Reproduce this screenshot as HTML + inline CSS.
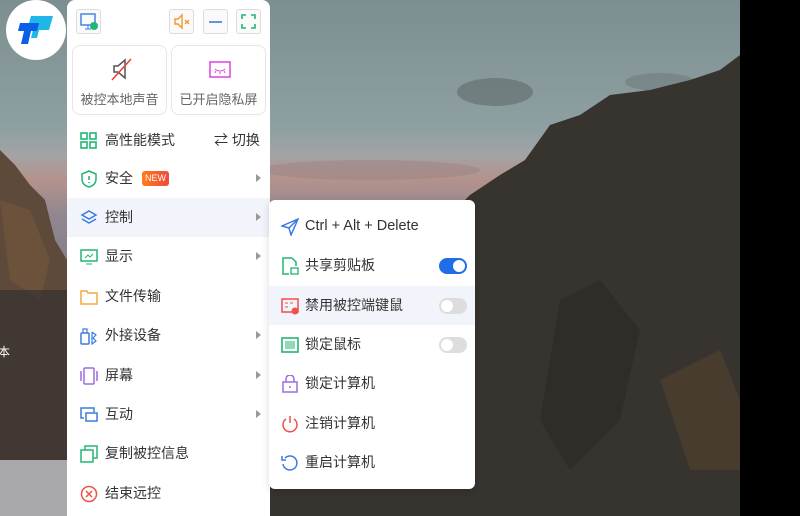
<!DOCTYPE html>
<html><head><meta charset="utf-8">
<style>
*{margin:0;padding:0;box-sizing:border-box}
body{width:800px;height:516px;overflow:hidden;position:relative;font-family:"Liberation Sans","Noto Sans CJK SC",sans-serif;background:#000}
.bg{position:absolute;left:0;top:0}
.menu{position:absolute;left:67px;top:0;width:203px;height:516px;background:#fff;border-radius:8px 8px 0 0}
.sub{position:absolute;left:269px;top:200px;width:206px;height:289px;background:#fff;border-radius:6px;box-shadow:0 2px 8px rgba(0,0,0,.15)}
.tb{position:absolute;top:9px;width:25px;height:25px;border:1px solid #dcdcdc;border-radius:3px;background:#fafafa}
.card{position:absolute;top:45px;width:95px;height:70px;border:1px solid #e6e6e6;border-radius:8px;text-align:center;font-size:13px;color:#666}
.card span{position:absolute;left:0;right:0;top:43px}
.card svg{position:absolute;left:36px;top:11px}
.row{position:absolute;left:0;right:0;height:39px;font-size:14px;color:#333}
.row svg{position:absolute;left:13px;top:11px}
.row .t{position:absolute;left:38px;top:10px;line-height:18px}
.row .ar{position:absolute;right:9px;top:15px;width:0;height:0;border-left:5px solid #999;border-top:4px solid transparent;border-bottom:4px solid transparent}
.hl{background:#f1f5fb}
.tg{position:absolute;right:8px;top:12px;width:28px;height:16px;border-radius:8px;background:#ddd}
.tg i{position:absolute;left:2px;top:2px;width:12px;height:12px;border-radius:50%;background:#fff}
.tg.on{background:#1f6ee8}.tg.on i{left:14px}
.srow{position:absolute;left:0;right:0;height:39px;font-size:14px;color:#333}
.srow svg{position:absolute;left:12px;top:11px}
.srow .t{position:absolute;left:36px;top:10px;line-height:18px}
</style></head><body>
<svg class="bg" width="800" height="516">
<defs>
<linearGradient id="sky" x1="0" y1="0" x2="0" y2="1">
<stop offset="0" stop-color="#7b8e90"/><stop offset=".25" stop-color="#8fa0a2"/><stop offset=".3" stop-color="#a3a3a4"/><stop offset=".35" stop-color="#b4928c"/><stop offset=".42" stop-color="#8f8690"/><stop offset="1" stop-color="#5d5a66"/></linearGradient>
</defs>
<rect width="740" height="516" fill="url(#sky)"/>
<ellipse cx="495" cy="92" rx="38" ry="14" fill="#606a6a" opacity=".6"/>
<ellipse cx="660" cy="82" rx="35" ry="9" fill="#6e7676" opacity=".5"/>
<ellipse cx="370" cy="170" rx="110" ry="10" fill="#9d8282" opacity=".5"/>
<polygon points="270,270 320,265 360,250 400,240 440,225 470,195 500,175 525,160 550,125 580,115 610,95 650,90 690,80 720,70 740,55 740,516 270,516" fill="#37332f"/>
<polygon points="560,300 600,280 640,330 620,420 570,470 540,420" fill="#2c2926" opacity=".6"/>
<polygon points="660,380 720,350 740,400 740,470 690,470" fill="#5a4630" opacity=".5"/>
<polygon points="0,150 15,165 30,185 45,200 55,240 67,260 67,516 0,516" fill="#5e4a3a"/>
<polygon points="0,200 30,210 50,260 40,300 10,280" fill="#7a5a3a" opacity=".5"/>
<rect x="0" y="290" width="67" height="170" fill="#363130" opacity=".7"/>
<rect x="0" y="460" width="67" height="56" fill="#a9a9ab"/>
<text x="-2" y="356" font-size="12" fill="#fff" font-family="Noto Sans CJK SC">本</text>
<rect x="740" width="60" height="516" fill="#000"/>
</svg>
<div style="position:absolute;left:6px;top:0;width:60px;height:60px;border-radius:50%;background:#fff"></div>
<svg style="position:absolute;left:17px;top:14px" width="38" height="32"><polygon points="14,2 36,2 32,16 22,16 20,24 14,24 16,16 10,16" fill="#1fb6e8"/><polygon points="3,9 22,9 20,17 14,17 11,30 4,30 7,17 1,17" fill="#0a5ee8"/></svg>
<div class="menu">
<div class="tb" style="left:9px"><svg width="23" height="23"><rect x="4" y="4" width="14" height="11" fill="none" stroke="#3a7be0" stroke-width="1.4"/><path d="M8 19h6M11 15v4" stroke="#3a7be0"/><circle cx="17" cy="16" r="4" fill="#22b573"/></svg></div>
<div class="tb" style="left:102px"><svg width="23" height="23"><path d="M5 9h3l4-4v13l-4-4H5z" fill="none" stroke="#f29a2e" stroke-width="1.4"/><path d="M15 10l4 4M19 10l-4 4" stroke="#f29a2e" stroke-width="1.4"/></svg></div>
<div class="tb" style="left:136px"><svg width="23" height="23"><path d="M5 12h13" stroke="#3a7be0" stroke-width="1.6"/></svg></div>
<div class="tb" style="left:169px"><svg width="23" height="23"><path d="M5 9V5h4M14 5h4v4M18 14v4h-4M9 18H5v-4" fill="none" stroke="#22b573" stroke-width="1.6"/></svg></div>
<div class="card" style="left:5px"><svg width="24" height="24"><path d="M5 9h4l7-6v18l-7-6H5z" fill="none" stroke="#555" stroke-width="1.5"/><path d="M3 23L22 2" stroke="#e8463c" stroke-width="1.6"/></svg><span>被控本地声音</span></div>
<div class="card" style="left:104px"><svg width="24" height="24"><rect x="2" y="5" width="20" height="15" fill="none" stroke="#e040e0" stroke-width="1.5"/><path d="M7 12q5 4 10 0M8 14l-1 2M12 15v2M16 14l1 2" stroke="#e040e0" fill="none"/></svg><span>已开启隐私屏</span></div>
<div class="row" style="top:121px"><svg width="18" height="18"><g fill="none" stroke="#22b573" stroke-width="1.6"><rect x="1" y="1" width="6" height="6"/><rect x="10" y="1" width="6" height="6"/><rect x="1" y="10" width="6" height="6"/><rect x="10" y="10" width="6" height="6"/></g></svg><span class="t">高性能模式</span><span class="t" style="left:147px;color:#333">⇄ 切换</span></div>
<div class="row" style="top:159px"><svg width="18" height="18"><path d="M9 1l7 3v5q0 6-7 8q-7-2-7-8V4z" fill="none" stroke="#22b573" stroke-width="1.5"/><path d="M9 6v4M9 12v1" stroke="#22b573" stroke-width="1.6"/></svg><span class="t">安全</span><span style="position:absolute;left:75px;top:12px;width:27px;height:15px;background:linear-gradient(90deg,#ff7a1a,#f04a3c);color:#fff;font-size:9px;line-height:15px;text-align:center;border-radius:3px">NEW</span><i class="ar"></i></div>
<div class="row hl" style="top:198px"><svg width="18" height="18"><path d="M9 2l7 4-7 4-7-4z M2 10l7 4 7-4" fill="none" stroke="#3a7be0" stroke-width="1.5"/></svg><span class="t">控制</span><i class="ar"></i></div>
<div class="row" style="top:237px"><svg width="18" height="18"><rect x="1" y="2" width="16" height="11" fill="none" stroke="#22b573" stroke-width="1.5"/><path d="M5 10l3-3 2 2 3-3M6 16h6" stroke="#22b573" fill="none"/></svg><span class="t">显示</span><i class="ar"></i></div>
<div class="row" style="top:277px"><svg width="18" height="18"><path d="M1 3h6l1 2h9v11H1z" fill="none" stroke="#f5a742" stroke-width="1.5"/></svg><span class="t">文件传输</span></div>
<div class="row" style="top:316px"><svg width="18" height="18"><rect x="1" y="6" width="8" height="11" rx="1" fill="none" stroke="#3a7be0" stroke-width="1.5"/><path d="M3 6V2h4v4M12 5l4 3-3 3 3 3-4 3V5" fill="none" stroke="#3a7be0" stroke-width="1.2"/></svg><span class="t">外接设备</span><i class="ar"></i></div>
<div class="row" style="top:356px"><svg width="18" height="18"><rect x="4" y="1" width="10" height="16" rx="1" fill="none" stroke="#9b6be0" stroke-width="1.5"/><path d="M1 4v10M17 4v10" stroke="#9b6be0" stroke-width="1.5"/></svg><span class="t">屏幕</span><i class="ar"></i></div>
<div class="row" style="top:395px"><svg width="18" height="18"><path d="M14 6V2H1v10h3" fill="none" stroke="#3a7be0" stroke-width="1.5"/><rect x="6" y="7" width="11" height="8" fill="none" stroke="#3a7be0" stroke-width="1.5"/></svg><span class="t">互动</span><i class="ar"></i></div>
<div class="row" style="top:434px"><svg width="18" height="18"><rect x="1" y="5" width="12" height="12" fill="none" stroke="#22b573" stroke-width="1.5"/><path d="M5 5V1h12v12h-4" fill="none" stroke="#22b573" stroke-width="1.5"/></svg><span class="t">复制被控信息</span></div>
<div class="row" style="top:474px"><svg width="18" height="18"><circle cx="9" cy="9" r="7.5" fill="none" stroke="#f0504a" stroke-width="1.5"/><path d="M6 6l6 6M12 6l-6 6" stroke="#f0504a" stroke-width="1.5"/></svg><span class="t">结束远控</span></div>
</div>
<div class="sub">
<div class="srow" style="top:7px"><svg width="18" height="18"><path d="M17 1L1 8l7 2 2 7zM8 10l9-9" fill="none" stroke="#3a7be0" stroke-width="1.5"/></svg><span class="t" style="font-size:14.5px">Ctrl + Alt + Delete</span></div>
<div class="srow" style="top:46px"><svg width="18" height="18"><path d="M11 1H2v16h6M11 1l4 4v4" fill="none" stroke="#22b573" stroke-width="1.5"/><rect x="10" y="11" width="7" height="6" fill="none" stroke="#22b573" stroke-width="1.3"/></svg><span class="t">共享剪贴板</span><div class="tg on"><i></i></div></div>
<div class="srow hl" style="top:86px"><svg width="18" height="18"><rect x="1" y="2" width="16" height="13" fill="none" stroke="#f0504a" stroke-width="1.5"/><path d="M4 6h3M9 6h3M4 10h3" stroke="#f0504a"/><circle cx="14" cy="14" r="3.5" fill="#f0504a"/></svg><span class="t">禁用被控端键鼠</span><div class="tg"><i></i></div></div>
<div class="srow" style="top:125px"><svg width="18" height="18"><rect x="1" y="2" width="16" height="14" fill="none" stroke="#22b573" stroke-width="1.6"/><rect x="4" y="5" width="10" height="8" fill="#22b573" opacity=".5"/></svg><span class="t">锁定鼠标</span><div class="tg"><i></i></div></div>
<div class="srow" style="top:164px"><svg width="18" height="18"><rect x="2" y="7" width="14" height="10" fill="none" stroke="#9b6be0" stroke-width="1.5"/><path d="M5 7V4a4 4 0 0 1 8 0v3M9 11v2" fill="none" stroke="#9b6be0" stroke-width="1.5"/></svg><span class="t">锁定计算机</span></div>
<div class="srow" style="top:204px"><svg width="18" height="18"><path d="M5 4a7 7 0 1 0 8 0M9 1v7" fill="none" stroke="#f0504a" stroke-width="1.5"/></svg><span class="t">注销计算机</span></div>
<div class="srow" style="top:243px"><svg width="18" height="18"><path d="M4 4a7 7 0 1 1-2 6M1 2v4h4" fill="none" stroke="#3a7be0" stroke-width="1.5"/></svg><span class="t">重启计算机</span></div>
</div>
</body></html>
